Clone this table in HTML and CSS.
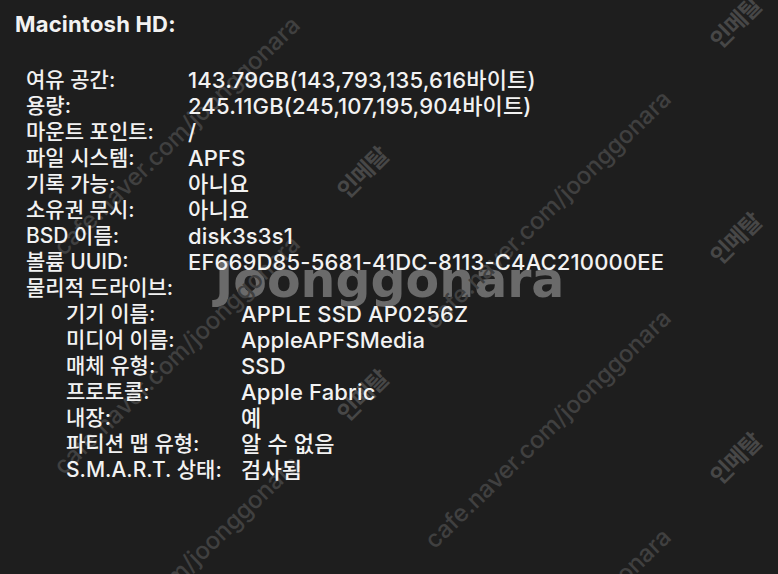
FILE: index.html
```html
<!DOCTYPE html>
<html lang="ko">
<head>
<meta charset="utf-8">
<title>Macintosh HD</title>
<link rel="stylesheet" href="styles.css">
</head>
<body>
<div class="screen">
  <div class="watermarks" aria-hidden="true">
    <span class="logo">Joonggonara</span>
    <span class="diag d-a">cafe.naver.com/joonggonara</span>
    <span class="diag d-b">cafe.naver.com/joonggonara</span>
    <span class="diag d-c">cafe.naver.com/joonggonara</span>
    <span class="diag d-d">cafe.naver.com/joonggonara</span>
    <span class="diag d-e">cafe.naver.com/joonggonara</span>
    <span class="diag d-f">cafe.naver.com/joonggonara</span>
    <span class="stamp s-1">인메탈</span>
    <span class="stamp s-2">인메탈</span>
    <span class="stamp s-3">인메탈</span>
    <span class="stamp s-4">인메탈</span>
    <span class="stamp s-5">인메탈</span>
  </div>
  <div class="content">
    <h1 class="title">Macintosh HD:</h1>
    <div class="props">
      <div class="row"><span class="label">여유 공간:</span><span class="value">143.79GB(143,793,135,616바이트)</span></div>
      <div class="row"><span class="label">용량:</span><span class="value">245.11GB(245,107,195,904바이트)</span></div>
      <div class="row"><span class="label">마운트 포인트:</span><span class="value">/</span></div>
      <div class="row"><span class="label">파일 시스템:</span><span class="value">APFS</span></div>
      <div class="row"><span class="label">기록 가능:</span><span class="value">아니요</span></div>
      <div class="row"><span class="label">소유권 무시:</span><span class="value">아니요</span></div>
      <div class="row"><span class="label">BSD 이름:</span><span class="value">disk3s3s1</span></div>
      <div class="row"><span class="label">볼륨 UUID:</span><span class="value">EF669D85-5681-41DC-8113-C4AC210000EE</span></div>
      <div class="row"><span class="label">물리적 드라이브:</span></div>
      <div class="row sub"><span class="label">기기 이름:</span><span class="value">APPLE SSD AP0256Z</span></div>
      <div class="row sub"><span class="label">미디어 이름:</span><span class="value">AppleAPFSMedia</span></div>
      <div class="row sub"><span class="label">매체 유형:</span><span class="value">SSD</span></div>
      <div class="row sub"><span class="label">프로토콜:</span><span class="value">Apple Fabric</span></div>
      <div class="row sub"><span class="label">내장:</span><span class="value">예</span></div>
      <div class="row sub"><span class="label">파티션 맵 유형:</span><span class="value">알 수 없음</span></div>
      <div class="row sub"><span class="label">S.M.A.R.T. 상태:</span><span class="value">검사됨</span></div>
    </div>
  </div>
</div>
</body>
</html>
```

FILE: styles.css
```css
html, body {
  margin: 0;
  padding: 0;
  background: #1e1e1e;
}

.screen {
  position: relative;
  width: 778px;
  height: 574px;
  overflow: hidden;
  background: #1e1e1e;
  font-family: "Inter", "Noto Sans CJK KR", sans-serif;
  color: #f2f2f2;
}

.watermarks {
  position: absolute;
  inset: 0;
  z-index: 0;
}

.logo {
  position: absolute;
  left: 215px;
  top: 254px;
  font-family: "DejaVu Sans", "Lato", sans-serif;
  font-weight: 700;
  font-size: 49px;
  line-height: 54px;
  letter-spacing: 0;
  color: #6a6a6a;
  white-space: nowrap;
}

.diag {
  position: absolute;
  font-family: "Inter", "Noto Sans", sans-serif;
  font-size: 24px;
  line-height: 24px;
  font-weight: 500;
  color: #404040;
  white-space: nowrap;
  transform: translate(-50%, -50%) rotate(-44deg);
}

.d-a { left: 177px; top: 136px; }
.d-b { left: 548px; top: 210px; }
.d-c { left: 177px; top: 355px; }
.d-d { left: 548px; top: 429px; }
.d-e { left: 177px; top: 575px; }
.d-f { left: 548px; top: 648px; }

.stamp {
  position: absolute;
  font-family: "Noto Sans CJK KR", sans-serif;
  font-weight: 700;
  font-size: 23px;
  line-height: 23px;
  letter-spacing: -1px;
  color: #474747;
  white-space: nowrap;
  transform: translate(-50%, -50%) rotate(-45deg);
}

.s-1 { left: 735px; top: 22px; }
.s-2 { left: 362px; top: 172px; }
.s-3 { left: 735px; top: 238px; }
.s-4 { left: 362px; top: 395px; }
.s-5 { left: 735px; top: 458px; }

.content {
  position: relative;
  z-index: 1;
  padding: 10px 0 0 15px;
}

.title {
  margin: 0;
  font-size: 22px;
  line-height: 28px;
  font-weight: 700;
  letter-spacing: 0.2px;
}

.props {
  margin-top: 29px;
  padding-left: 11px;
  display: flex;
  flex-direction: column;
}

.row {
  display: flex;
  height: 26px;
  line-height: 26px;
  white-space: nowrap;
  font-weight: 500;
}

.row .label {
  width: 162px;
  flex: none;
  font-size: 21px;
}

.row .value {
  font-size: 22px;
  letter-spacing: 0.15px;
}

.row.sub {
  padding-left: 40px;
}

.row.sub .label {
  width: 175px;
}
```
